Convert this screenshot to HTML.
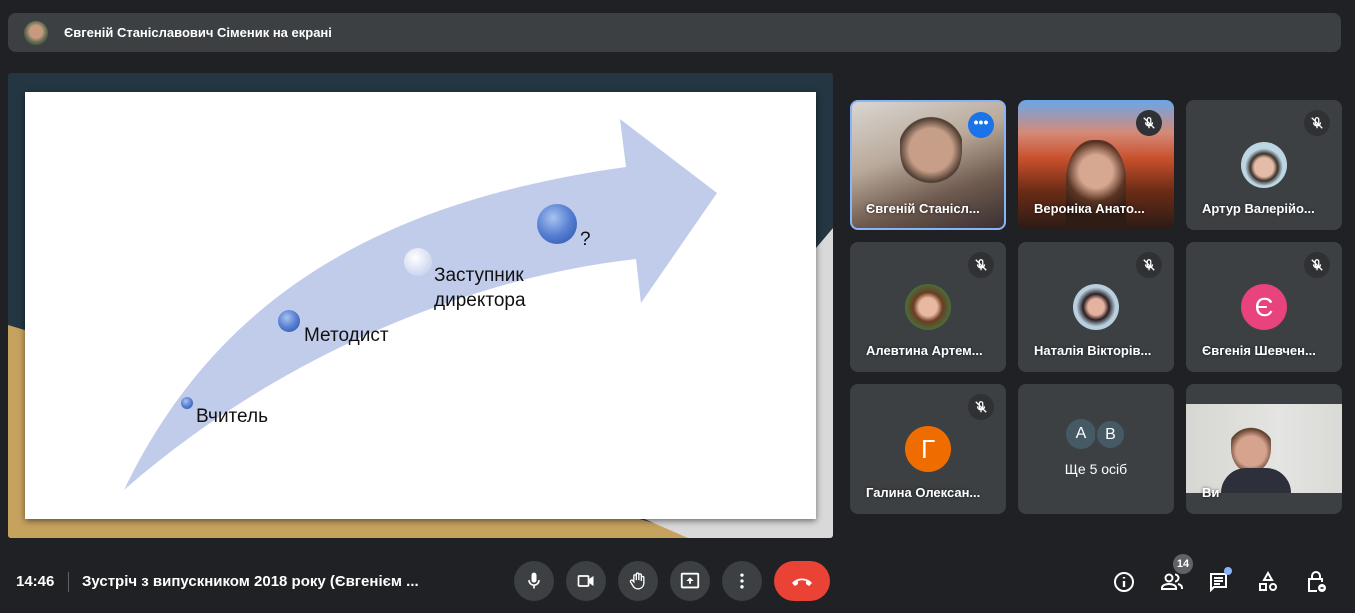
<!DOCTYPE html>
<html><head><meta charset="utf-8"><style>
*{margin:0;padding:0;box-sizing:border-box}
body{width:1355px;height:613px;background:#202124;font-family:"Liberation Sans",Arial,sans-serif;position:relative;overflow:hidden;color:#fff}
.abs{position:absolute}
.top{left:8px;top:13px;width:1333px;height:39px;background:#3c4043;border-radius:8px}
.tile{position:absolute;width:156px;height:130px;background:#3c4043;border-radius:8px;overflow:hidden}
.name{position:absolute;left:16px;bottom:14px;font-size:13px;font-weight:bold;color:#fff;white-space:nowrap;text-shadow:0 0 3px rgba(0,0,0,.6)}
.mic{position:absolute;right:12px;top:10px;width:26px;height:26px;border-radius:50%;background:#2f3134}
.av{position:absolute;left:55px;top:42px;width:46px;height:46px;border-radius:50%}
.btn{position:absolute;top:561px;width:40px;height:40px;border-radius:50%;background:#3c4043}
.btn svg,.ic svg,.mic svg{position:absolute;left:50%;top:50%;transform:translate(-50%,-50%)}
.ic{position:absolute;top:570px;width:24px;height:24px}
</style></head><body>
<div class="abs top"></div>
<div class="abs" style="left:24px;top:21px;width:24px;height:24px;border-radius:50%;background:radial-gradient(circle at 50% 45%,#c79a80 0 35%,#5f6a4e 60%,#2b3a2a)"></div>
<div class="abs" style="left:64px;top:25px;font-size:13px;font-weight:bold">Євгеній Станіславович Сіменик на екрані</div>

<div class="abs" style="left:8px;top:73px;width:825px;height:465px;background:#233641;overflow:hidden;border-radius:3px">
<svg width="825" height="465" style="position:absolute;left:0;top:0">
<polygon points="0,252 60,270 60,465 0,465" fill="#c6a25f"/>
<polygon points="0,300 0,465 700,465 610,440 0,440" fill="#c6a25f"/>
<polygon points="808,175 825,155 825,465 680,465 808,420" fill="#d9d9d9"/>
<polygon points="600,430 808,440 808,465 680,465" fill="#d9d9d9"/>
</svg>
</div>
<div class="abs" style="left:25px;top:92px;width:791px;height:427px;background:#fff;box-shadow:0 2px 6px rgba(0,0,0,.5)"></div>
<svg class="abs" style="left:0;top:0" width="840" height="545">
<defs>
<radialGradient id="b" cx="40%" cy="35%" r="70%"><stop offset="0" stop-color="#a9c3f0"/><stop offset=".6" stop-color="#5a82d3"/><stop offset="1" stop-color="#3b62b8"/></radialGradient>
<radialGradient id="w" cx="40%" cy="35%" r="70%"><stop offset="0" stop-color="#fff"/><stop offset="1" stop-color="#c8d2ec"/></radialGradient>
</defs>
<path d="M124,490 C220,290 390,200 626,167 L620,119 L717,193 L641,303 L636,259 C450,280 260,370 124,490 Z" fill="#c1cbea"/>
<circle cx="187" cy="403" r="6" fill="url(#b)"/>
<circle cx="289" cy="321" r="11" fill="url(#b)"/>
<circle cx="418" cy="262" r="14" fill="url(#w)"/>
<circle cx="557" cy="224" r="20" fill="url(#b)"/>
<g font-family="Liberation Sans,sans-serif" font-size="19" fill="#111">
<text x="196" y="422">Вчитель</text>
<text x="304" y="341">Методист</text>
<text x="434" y="281">Заступник</text>
<text x="434" y="306">директора</text>
<text x="580" y="245">?</text>
</g>
</svg>

<div class="tile" style="left:850px;top:100px;background:linear-gradient(160deg,#d9d6d2 0%,#b9a99a 40%,#6e5a4e 70%,#3a2f33 100%);border:2px solid #8ab4f8">
<div class="abs" style="left:48px;top:4px;width:62px;height:80px;border-radius:45%;background:radial-gradient(circle at 50% 55%,#c79f88 0 40%,#4b3a30 60%,transparent 62%)"></div>
<div class="abs" style="left:116px;top:10px;width:26px;height:26px;border-radius:50%;background:#1a73e8;font-size:14px;text-align:center;line-height:20px;font-weight:bold">•••</div>
<div class="name" style="left:14px;bottom:12px">Євгеній Станісл...</div></div>
<div class="tile" style="left:1018px;top:100px;background:linear-gradient(180deg,#6aa6e8 0%,#d58a78 25%,#c8502c 45%,#6b2c15 70%,#2a1b16 100%)">
<div class="abs" style="left:48px;top:40px;width:60px;height:90px;border-radius:45% 45% 10% 10%;background:radial-gradient(circle at 50% 35%,#d7a891 0 25%,#5a3322 45%,#2f1c14 70%)"></div>
<div class="mic"><svg width="14" height="14" viewBox="0 0 24 24"><path d="M12 3a3 3 0 0 0-3 3v6a3 3 0 0 0 6 0V6a3 3 0 0 0-3-3zM6 11a6 6 0 0 0 12 0M12 17v4M3 3l18 18" stroke="#fff" stroke-width="2.2" fill="none"/></svg></div>
<div class="name">Вероніка Анато...</div></div>
<div class="tile" style="left:1186px;top:100px">
<div class="av" style="background:radial-gradient(circle at 50% 55%,#e4bba6 0 28%,#3b302a 40%,#bcd7e3 55%)"></div>
<div class="mic"><svg width="14" height="14" viewBox="0 0 24 24"><path d="M12 3a3 3 0 0 0-3 3v6a3 3 0 0 0 6 0V6a3 3 0 0 0-3-3zM6 11a6 6 0 0 0 12 0M12 17v4M3 3l18 18" stroke="#fff" stroke-width="2.2" fill="none"/></svg></div>
<div class="name">Артур Валерійо...</div></div>

<div class="tile" style="left:850px;top:242px">
<div class="av" style="background:radial-gradient(circle at 50% 50%,#e8b9a0 0 28%,#6a3d22 45%,#4a6d3a 70%)"></div>
<div class="mic"><svg width="14" height="14" viewBox="0 0 24 24"><path d="M12 3a3 3 0 0 0-3 3v6a3 3 0 0 0 6 0V6a3 3 0 0 0-3-3zM6 11a6 6 0 0 0 12 0M12 17v4M3 3l18 18" stroke="#fff" stroke-width="2.2" fill="none"/></svg></div>
<div class="name">Алевтина Артем...</div></div>
<div class="tile" style="left:1018px;top:242px">
<div class="av" style="background:radial-gradient(circle at 50% 50%,#e3b3a0 0 25%,#2a1e22 40%,#b8cfe0 60%)"></div>
<div class="mic"><svg width="14" height="14" viewBox="0 0 24 24"><path d="M12 3a3 3 0 0 0-3 3v6a3 3 0 0 0 6 0V6a3 3 0 0 0-3-3zM6 11a6 6 0 0 0 12 0M12 17v4M3 3l18 18" stroke="#fff" stroke-width="2.2" fill="none"/></svg></div>
<div class="name">Наталія Вікторів...</div></div>
<div class="tile" style="left:1186px;top:242px">
<div class="av" style="background:#e8437c;text-align:center;line-height:46px;font-size:26px">Є</div>
<div class="mic"><svg width="14" height="14" viewBox="0 0 24 24"><path d="M12 3a3 3 0 0 0-3 3v6a3 3 0 0 0 6 0V6a3 3 0 0 0-3-3zM6 11a6 6 0 0 0 12 0M12 17v4M3 3l18 18" stroke="#fff" stroke-width="2.2" fill="none"/></svg></div>
<div class="name">Євгенія Шевчен...</div></div>

<div class="tile" style="left:850px;top:384px">
<div class="av" style="background:#ef6c00;text-align:center;line-height:46px;font-size:26px">Г</div>
<div class="mic"><svg width="14" height="14" viewBox="0 0 24 24"><path d="M12 3a3 3 0 0 0-3 3v6a3 3 0 0 0 6 0V6a3 3 0 0 0-3-3zM6 11a6 6 0 0 0 12 0M12 17v4M3 3l18 18" stroke="#fff" stroke-width="2.2" fill="none"/></svg></div>
<div class="name">Галина Олексан...</div></div>
<div class="tile" style="left:1018px;top:384px">
<div class="abs" style="left:48px;top:35px;width:30px;height:30px;border-radius:50%;background:#455a64;text-align:center;line-height:30px;font-size:16px">А</div>
<div class="abs" style="left:77px;top:35px;width:31px;height:31px;border-radius:50%;background:#455a64;border:2px solid #3c4043;text-align:center;line-height:27px;font-size:16px">В</div>
<div class="abs" style="left:0;width:156px;top:77px;text-align:center;font-size:14px">Ще 5 осіб</div></div>
<div class="tile" style="left:1186px;top:384px">
<div class="abs" style="left:0;top:20px;width:156px;height:89px;background:linear-gradient(90deg,#d6d7d2,#e4e5e2 60%,#d9dad6)"></div>
<div class="abs" style="left:45px;top:36px;width:40px;height:52px;border-radius:45%;background:radial-gradient(circle at 50% 60%,#d6a48e 0 40%,#5a3a28 62%,transparent 64%)"></div>
<div class="abs" style="left:35px;top:84px;width:70px;height:25px;border-radius:30px 30px 0 0;background:#2d2f3a"></div>
<div class="name" style="left:16px">Ви</div></div>

<div class="abs" style="left:16px;top:573px;font-size:15px;font-weight:bold">14:46</div>
<div class="abs" style="left:68px;top:572px;width:1px;height:20px;background:#5f6368"></div>
<div class="abs" style="left:82px;top:573px;font-size:15px;font-weight:bold">Зустріч з випускником 2018 року (Євгенієм ...</div>

<div class="btn" style="left:514px"><svg width="20" height="20" viewBox="0 0 24 24"><path d="M6 11a6 6 0 0 0 12 0M12 17v4" stroke="#fff" stroke-width="2" fill="none"/><rect x="9" y="2" width="6" height="12" rx="3" fill="#fff"/></svg></div>
<div class="btn" style="left:566px"><svg width="20" height="20" viewBox="0 0 24 24"><rect x="3" y="6" width="12" height="12" rx="1" stroke="#fff" stroke-width="2" fill="none"/><path d="M15 10l6-4v12l-6-4z" fill="#fff"/></svg></div>
<div class="btn" style="left:618px"><svg width="20" height="20" viewBox="0 0 24 24"><path d="M7 13V6a1.5 1.5 0 0 1 3 0v5V4a1.5 1.5 0 0 1 3 0v7V5a1.5 1.5 0 0 1 3 0v7V8a1.5 1.5 0 0 1 3 0v7a7 7 0 0 1-13 3l-3-5a1.5 1.5 0 0 1 3-1z" stroke="#fff" stroke-width="1.6" fill="none"/></svg></div>
<div class="btn" style="left:670px"><svg width="22" height="22" viewBox="0 0 24 24"><rect x="3" y="4" width="18" height="15" rx="1" stroke="#fff" stroke-width="2" fill="none"/><path d="M12 8l-4 4h3v3h2v-3h3z" fill="#fff"/></svg></div>
<div class="btn" style="left:722px"><svg width="20" height="20" viewBox="0 0 24 24"><circle cx="12" cy="5" r="2" fill="#fff"/><circle cx="12" cy="12" r="2" fill="#fff"/><circle cx="12" cy="19" r="2" fill="#fff"/></svg></div>
<div class="abs" style="left:774px;top:561px;width:56px;height:40px;border-radius:20px;background:#ea4335"><svg style="position:absolute;left:16px;top:12px" width="24" height="16" viewBox="0 0 24 16"><path d="M2 10c5-6 15-6 20 0l-3 3-3-2v-3c-3-1-5-1-8 0v3l-3 2z" fill="#fff"/></svg></div>

<div class="ic" style="left:1112px"><svg width="24" height="24" viewBox="0 0 24 24"><circle cx="12" cy="12" r="9" stroke="#fff" stroke-width="2" fill="none"/><path d="M12 11v6M12 7v1.5" stroke="#fff" stroke-width="2.4"/></svg></div>
<div class="abs" style="left:1173px;top:554px;width:20px;height:20px;border-radius:50%;background:#5f6368;font-size:11px;font-weight:bold;text-align:center;line-height:20px">14</div>
<div class="ic" style="left:1160px"><svg width="24" height="24" viewBox="0 0 24 24"><circle cx="9" cy="8" r="3.5" stroke="#fff" stroke-width="2" fill="none"/><path d="M2 19v-1c0-3 4-4 7-4s7 1 7 4v1z" stroke="#fff" stroke-width="2" fill="none"/><path d="M15 4.5a3.5 3.5 0 0 1 0 7M18 14c2 .5 4 1.5 4 4v1" stroke="#fff" stroke-width="2" fill="none"/></svg></div>
<div class="ic" style="left:1207px"><svg width="24" height="24" viewBox="0 0 24 24"><path d="M4 4h15v13H7l-3 3z" stroke="#fff" stroke-width="2" fill="none"/><path d="M7 8h9M7 11h9M7 14h6" stroke="#fff" stroke-width="2"/></svg></div>
<div class="abs" style="left:1224px;top:567px;width:8px;height:8px;border-radius:50%;background:#8ab4f8"></div>
<div class="ic" style="left:1256px"><svg width="24" height="24" viewBox="0 0 24 24"><path d="M12 3l4 7H8z" stroke="#fff" stroke-width="2" fill="none"/><rect x="4" y="14" width="6" height="6" stroke="#fff" stroke-width="2" fill="none"/><circle cx="17" cy="17" r="3" stroke="#fff" stroke-width="2" fill="none"/></svg></div>
<div class="ic" style="left:1304px"><svg width="24" height="24" viewBox="0 0 24 24"><path d="M8 9V6a4 4 0 0 1 8 0v3M13 21H5V9h13v3" stroke="#fff" stroke-width="2" fill="none"/><circle cx="18" cy="18" r="4" fill="#fff"/><path d="M16.5 18h3" stroke="#202124" stroke-width="1.6"/></svg></div>
</body></html>
